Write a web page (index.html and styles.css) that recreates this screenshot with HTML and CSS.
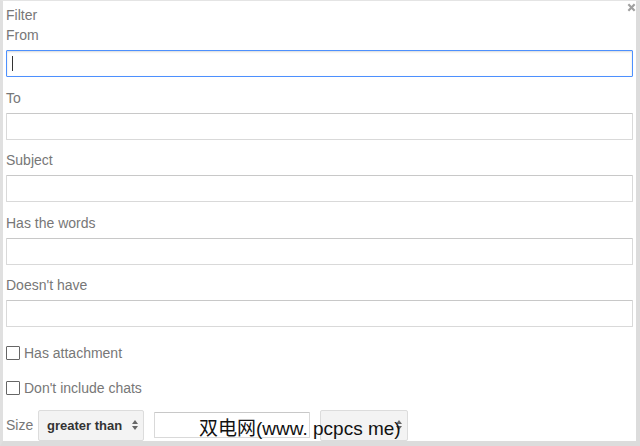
FILE: index.html
```html
<!DOCTYPE html>
<html lang="en">
<head>
  <meta charset="UTF-8" />
  <title>Filter</title>
  <link rel="stylesheet" href="styles.css">
</head>
<body>
  <div class="dialog">
    <svg class="close" viewBox="0 0 10 10"><path d="M1.5 1.5 8.5 8.5 M8.5 1.5 1.5 8.5" /></svg>
    <div class="title">Filter</div>

    <div class="field">
      <label>From</label>
      <div class="box focused"><span class="caret"></span></div>
    </div>
    <div class="field">
      <label>To</label>
      <div class="box"></div>
    </div>
    <div class="field">
      <label>Subject</label>
      <div class="box"></div>
    </div>
    <div class="field">
      <label>Has the words</label>
      <div class="box"></div>
    </div>
    <div class="field">
      <label>Doesn't have</label>
      <div class="box"></div>
    </div>

    <div class="checks">
      <div class="check"><span class="tick"></span>Has attachment</div>
      <div class="check"><span class="tick"></span>Don't include chats</div>
    </div>

    <div class="size-row">
      <span class="size-label">Size</span>
      <div class="select">greater than
        <svg class="arrows" viewBox="0 0 8 12"><path d="M4 1 7 5H1z M4 11 7 7H1z" /></svg>
      </div>
      <div class="box small"></div>
      <div class="select unit">
        <svg class="arrows" viewBox="0 0 8 12"><path d="M4 1 7 5H1z M4 11 7 7H1z" /></svg>
      </div>
      <span class="watermark">双电网(www. pcpcs me)</span>
    </div>
  </div>
</body>
</html>
```

FILE: styles.css
```css
body {
  margin: 0;
  font-family: 'Liberation Sans', Arial, sans-serif;
  background: #fff;
}

.dialog {
  position: relative;
  width: 640px;
  height: 446px;
  box-sizing: border-box;
  border-top: 1px solid #e4e4e4;
  border-left: 3px solid #e0e0e0;
  border-right: 4px solid #dcdcdc;
  border-bottom: 5px solid #dcdcdc;
  padding: 4px 3px 0 3px;
  color: #777;
  font-size: 14px;
}

.close {
  position: absolute;
  top: 2px;
  right: 0;
  width: 9px;
  height: 9px;
  stroke: #a0a0a0;
  stroke-width: 2.4;
}

.title,
.field label {
  display: block;
  line-height: 20px;
}

.field label {
  margin-bottom: 5px;
}

.box {
  height: 27px;
  box-sizing: border-box;
  border: 1px solid #d9d9d9;
  border-top-color: #c8c8c8;
  border-radius: 1px;
  background: #fff;
}

.field .box {
  margin-bottom: 10.5px;
}

.box.focused {
  border: 1px solid #4d90fe;
  box-shadow: inset 0 1px 2px rgba(0, 0, 0, 0.15);
  padding: 5px 0 0 5px;
}

.caret {
  display: block;
  width: 1px;
  height: 15px;
  background: #333;
}

.checks {
  display: flex;
  flex-direction: column;
  gap: 15px;
  padding-top: 5px;
  margin-bottom: 12px;
}

.check {
  display: flex;
  align-items: center;
  height: 20px;
}

.tick {
  width: 12px;
  height: 12px;
  border: 1px solid #666;
  border-radius: 1px;
  margin-right: 4px;
}

.size-row {
  position: relative;
  display: flex;
  align-items: center;
}

.size-label {
  width: 32px;
}

.select {
  display: flex;
  align-items: center;
  justify-content: space-between;
  width: 106px;
  height: 31px;
  box-sizing: border-box;
  padding: 0 4px 0 8px;
  border: 1px solid #dcdcdc;
  border-radius: 2px;
  background: #f3f3f3;
  color: #333;
  font-size: 13px;
  font-weight: bold;
}

.arrows {
  width: 8px;
  height: 12px;
  fill: #666;
}

.box.small {
  width: 156px;
  height: 26px;
  margin-left: 10px;
}

.select.unit {
  width: 88px;
  margin-left: 10px;
  justify-content: flex-end;
}

.watermark {
  position: absolute;
  left: 193px;
  top: 3px;
  font-family: 'Liberation Sans', 'Noto Sans CJK SC', sans-serif;
  font-size: 19px;
  color: #111;
  white-space: nowrap;
}
```
